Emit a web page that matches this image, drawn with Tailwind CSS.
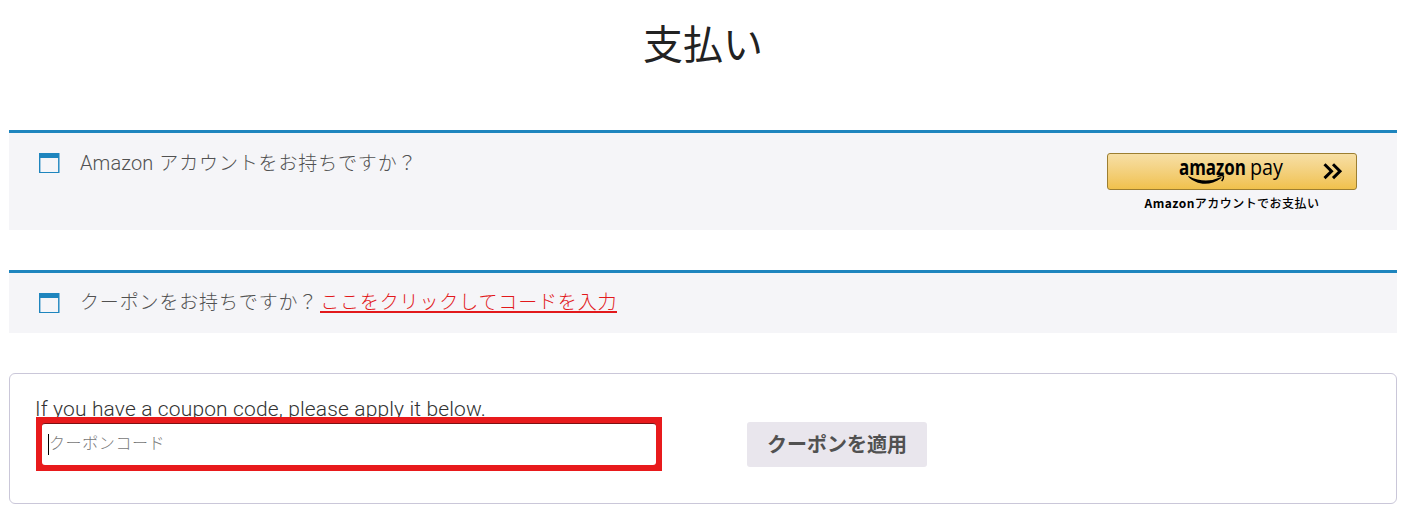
<!DOCTYPE html>
<html lang="ja">
<head>
    <meta charset="UTF-8">
    <meta name="viewport" content="width=device-width, initial-scale=1.0">
    <title>支払い</title>
    <script src="https://cdn.jsdelivr.net/npm/@tailwindcss/browser@4"></script>
</head>
<body class="bg-white h-[520px] overflow-hidden px-[9px] font-['Roboto','Noto_Sans_CJK_JP',sans-serif] text-[#515151]">
    <!-- Title -->
    <h1 class="h-[130px] pt-4 text-center text-[40px] leading-[60px] text-[#222]">支払い</h1>

    <!-- Amazon Pay -->
    <div class="flex h-[100px] items-start border-t-3 border-[#1e85be] bg-[#f5f5f8] pl-[30px] pr-10">
        <svg class="mt-5 h-5 w-[21px] shrink-0" viewBox="0 0 21 20">
            <path fill="#1e85be" fill-rule="evenodd" d="M0 0h20.5v20H0zM1.4 5v14h17.7V5z"/>
        </svg>
        <p class="ml-5 mt-[15px] text-[19px] font-light leading-[30px] tracking-[0.85px]"><span class="text-[20px] tracking-[0.1px]">Amazon </span><span class="ml-[1px]">アカウントをお持ちですか？</span></p>
        <div class="ml-auto mt-5 w-[250px]">
            <button class="flex h-[37px] w-full items-center rounded-[3px] border border-[#9c7e31] bg-linear-to-b from-[#f7dfa5] to-[#f0c14b]">
                <svg class="h-[35px] w-[248px]" viewBox="0 0 248 35" fill="none">
                    <text x="71" y="21" fill="#000" font-family="Open Sans" font-weight="700" font-size="21.5" textLength="67" lengthAdjust="spacingAndGlyphs">amazon</text>
                    <text x="142" y="21" fill="#000" font-family="Open Sans" font-size="21" textLength="33" lengthAdjust="spacingAndGlyphs">pay</text>
                    <path fill="#000" d="M81 22.2q16 8.200 31.500 1.100c1-.4 1.500.4.700 1-13 9.400-26 5.400-32.700-1.300-.4-.5-.1-1.100.5-.8z"/>
                    <path stroke="#000" stroke-width="1.5" d="M109.500 22.600q5-1.800 6 -.5 .4 2-1.800 5"/>
                    <path stroke="#000" stroke-width="3" d="M216.500 10.300l7 6.900-7 6.900M225 10.300l7 6.900-7 6.900"/>
                </svg>
            </button>
            <p class="mt-1 text-center text-[12px] font-medium leading-[18px] tracking-[0.45px] text-black font-['Noto_Sans_CJK_JP',sans-serif]"><span class="font-bold">Amazon</span>アカウントでお支払い</p>
        </div>
    </div>

    <!-- Coupon toggle -->
    <div class="mt-10 flex h-[63px] items-start border-t-3 border-[#1e85be] bg-[#f5f5f8] pl-[30px]">
        <svg class="mt-5 h-5 w-[21px] shrink-0" viewBox="0 0 21 20">
            <path fill="#1e85be" fill-rule="evenodd" d="M0 0h20.5v20H0zM1.4 5v14h17.7V5z"/>
        </svg>
        <p class="ml-5 mt-[15px] text-[19px] font-light leading-[30px] tracking-[0.85px]">クーポンをお持ちですか？<a href="#" class="ml-[2px] inline-block h-[25px] border-b-2 border-[#e2191c] text-[#e2191c]">ここをクリックしてコードを入力</a></p>
    </div>

    <!-- Coupon form -->
    <form class="mt-10 h-[131px] rounded-md border border-[#cac7d9] pl-[25px] pt-5">
        <p class="h-[23px] text-[21px] font-light leading-[30px] tracking-[0.14px] text-[#333]">If you have a coupon code, please apply it below.</p>
        <div class="flex items-start">
            <div class="relative ml-px h-[54px] w-[626px] border-6 border-[#e81a1c] bg-[#e81a1c]">
                <div class="flex h-[42px] items-center rounded-[3px] border-t border-[#7c1012] bg-white pl-[6px]">
                    <span class="h-[21px] w-px bg-black"></span>
                    <span class="-mt-[2px] text-[16px] font-light tracking-[0.6px] text-[#777]">クーポンコード</span>
                </div>
            </div>
            <button class="ml-[85px] mt-[5px] h-[45px] w-[180px] rounded-[3px] bg-[#e9e6ed] text-[20px] font-bold text-[#515151]">クーポンを適用</button>
        </div>
    </form>
</body>
</html>
